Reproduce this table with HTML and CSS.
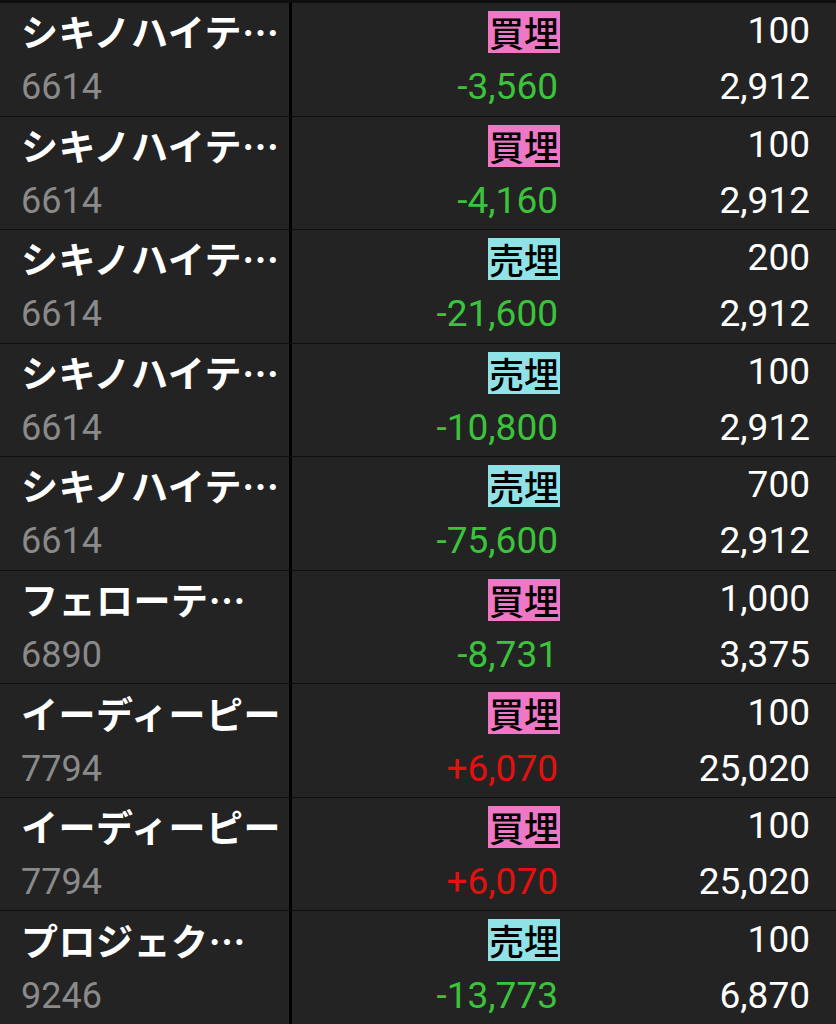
FILE: index.html
```html
<!DOCTYPE html>
<html lang="ja">
<head>
<meta charset="utf-8">
<link rel="stylesheet" href="styles.css">
</head>
<body>
<div class="list">
  <div class="row">
    <div class="cell left"><div class="line name">シキノハイテ…</div><div class="line code">6614</div></div>
    <div class="cell mid"><div class="line"><span class="badge buy">買埋</span></div><div class="line num minus">-3,560</div></div>
    <div class="cell right"><div class="line num">100</div><div class="line num">2,912</div></div>
  </div>
  <div class="row">
    <div class="cell left"><div class="line name">シキノハイテ…</div><div class="line code">6614</div></div>
    <div class="cell mid"><div class="line"><span class="badge buy">買埋</span></div><div class="line num minus">-4,160</div></div>
    <div class="cell right"><div class="line num">100</div><div class="line num">2,912</div></div>
  </div>
  <div class="row">
    <div class="cell left"><div class="line name">シキノハイテ…</div><div class="line code">6614</div></div>
    <div class="cell mid"><div class="line"><span class="badge sell">売埋</span></div><div class="line num minus">-21,600</div></div>
    <div class="cell right"><div class="line num">200</div><div class="line num">2,912</div></div>
  </div>
  <div class="row">
    <div class="cell left"><div class="line name">シキノハイテ…</div><div class="line code">6614</div></div>
    <div class="cell mid"><div class="line"><span class="badge sell">売埋</span></div><div class="line num minus">-10,800</div></div>
    <div class="cell right"><div class="line num">100</div><div class="line num">2,912</div></div>
  </div>
  <div class="row">
    <div class="cell left"><div class="line name">シキノハイテ…</div><div class="line code">6614</div></div>
    <div class="cell mid"><div class="line"><span class="badge sell">売埋</span></div><div class="line num minus">-75,600</div></div>
    <div class="cell right"><div class="line num">700</div><div class="line num">2,912</div></div>
  </div>
  <div class="row">
    <div class="cell left"><div class="line name">フェローテ…</div><div class="line code">6890</div></div>
    <div class="cell mid"><div class="line"><span class="badge buy">買埋</span></div><div class="line num minus">-8,731</div></div>
    <div class="cell right"><div class="line num">1,000</div><div class="line num">3,375</div></div>
  </div>
  <div class="row">
    <div class="cell left"><div class="line name">イーディーピー</div><div class="line code">7794</div></div>
    <div class="cell mid"><div class="line"><span class="badge buy">買埋</span></div><div class="line num plus">+6,070</div></div>
    <div class="cell right"><div class="line num">100</div><div class="line num">25,020</div></div>
  </div>
  <div class="row">
    <div class="cell left"><div class="line name">イーディーピー</div><div class="line code">7794</div></div>
    <div class="cell mid"><div class="line"><span class="badge buy">買埋</span></div><div class="line num plus">+6,070</div></div>
    <div class="cell right"><div class="line num">100</div><div class="line num">25,020</div></div>
  </div>
  <div class="row">
    <div class="cell left"><div class="line name">プロジェク…</div><div class="line code">9246</div></div>
    <div class="cell mid"><div class="line"><span class="badge sell">売埋</span></div><div class="line num minus">-13,773</div></div>
    <div class="cell right"><div class="line num">100</div><div class="line num">6,870</div></div>
  </div>
</div>
</body>
</html>
```
FILE: styles.css
```css
* { box-sizing: border-box; }
html, body { margin: 0; padding: 0; background: #0d0d0d; }
body { width: 836px; height: 1024px; overflow: hidden; font-family: Roboto, "Noto Sans CJK JP", sans-serif; }
.list {
  height: 1024px;
  padding-top: 3px;
  display: grid;
  grid-template-rows: repeat(9, minmax(0, 1fr));
  row-gap: 1px;
  background: #0e0e0e;
}
.row {
  min-height: 0;
  overflow: hidden;
  display: grid;
  grid-template-columns: 289px 271px 276px;
  background: #232323;
}
.cell { display: flex; flex-direction: column; justify-content: center; }
.left { padding-left: 21px; }
.mid { border-left: 3px solid #000; align-items: flex-end; padding-right: 0; }
.right { align-items: flex-end; padding-right: 26px; }
.line { height: 56px; line-height: 56px; white-space: nowrap; flex: none; }
.name {
  font-family: "Noto Sans CJK JP", sans-serif;
  font-size: 37px;
  font-weight: 700;
  letter-spacing: 0.5px;
  color: #ffffff;
}
.code { font-size: 36px; color: #8a8a8a; }
.num { font-size: 37px; color: #ffffff; }
.mid .num { padding-right: 2px; }
.minus { color: #3bc43b; }
.plus { color: #e3100f; }
.badge {
  display: inline-block;
  font-family: "Noto Sans CJK JP", sans-serif;
  font-size: 35px;
  font-weight: 500;
  line-height: 42px;
  height: 42px;
  padding: 0 1px;
  color: #000;
  vertical-align: middle;
}
.buy { background: #ef78c6; }
.sell { background: #8fe3e6; }
```
